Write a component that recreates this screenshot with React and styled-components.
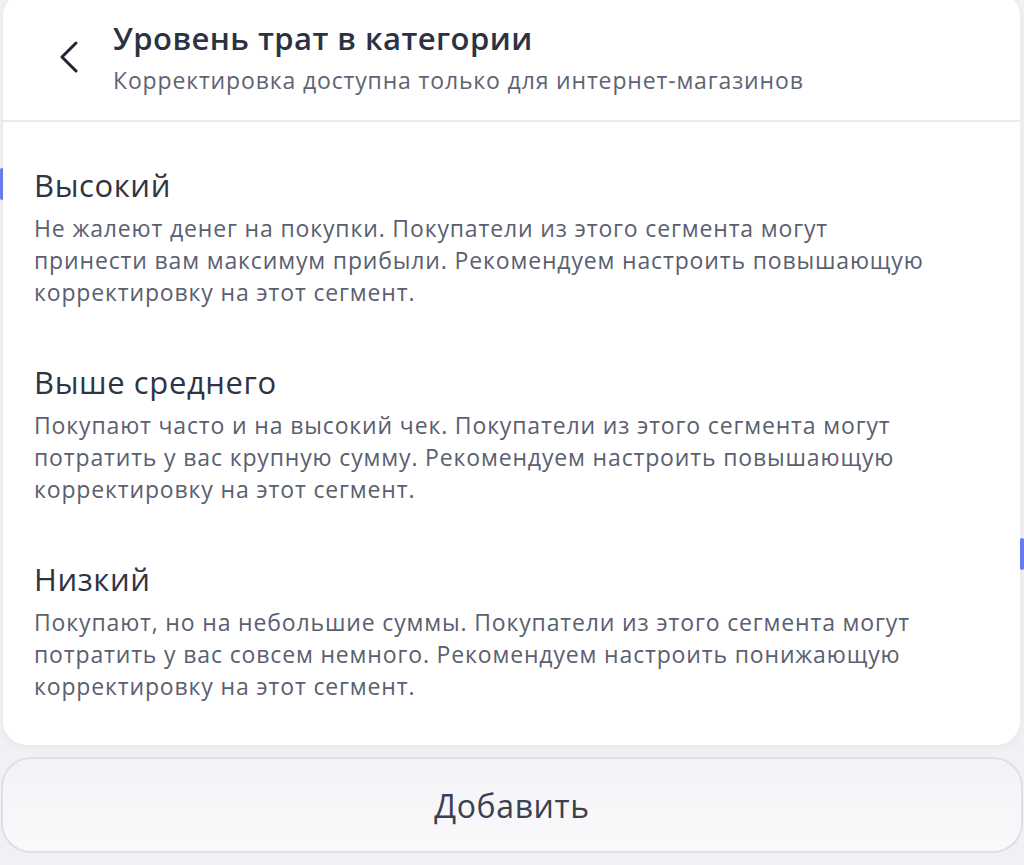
import React from "react";
import styled, { createGlobalStyle } from "styled-components";

const Global = createGlobalStyle`
  html, body { margin: 0; padding: 0; }
  body {
    background: #f1f1f5;
    font-family: "Open Sans", "Noto Sans", sans-serif;
    -webkit-font-smoothing: antialiased;
  }
`;

const Page = styled.div`
  position: relative;
  width: 1024px;
  height: 865px;
  overflow: hidden;
  display: flex;
  flex-direction: column;
  padding: 0 1px 0 1px;
  box-sizing: border-box;
`;

const Accent = styled.div`
  position: absolute;
  width: 4px;
  height: 32px;
  background: #6a7cf0;
  border-radius: 2px;
  top: ${(p) => p.$top}px;
  ${(p) => (p.$right ? "right: 0;" : "left: 0;")}
`;

const Card = styled.div`
  position: relative;
  margin: -8px 3px 0 2px;
  background: #ffffff;
  border-radius: 24px;
  box-shadow: 0 2px 8px rgba(40, 40, 80, 0.06);
  display: flex;
  flex-direction: column;
  height: 753px;
  box-sizing: border-box;
`;

const Header = styled.div`
  display: flex;
  align-items: flex-start;
  padding: 27px 24px 0 54px;
  height: 130px;
  box-sizing: border-box;
  border-bottom: 2px solid #e9e9ee;
`;

const BackButton = styled.button`
  width: 24px;
  height: 34px;
  margin-top: 21px;
  margin-right: 32px;
  padding: 0;
  border: none;
  background: none;
  display: flex;
  align-items: center;
  justify-content: center;
  cursor: pointer;
`;

const HeaderText = styled.div`
  display: flex;
  flex-direction: column;
`;

const Title = styled.h1`
  margin: 0;
  font-size: 31px;
  line-height: 38px;
  font-weight: 600;
  color: #2b3242;
  letter-spacing: 0.45px;
`;

const Subtitle = styled.div`
  font-size: 23px;
  line-height: 30px;
  color: #5e6474;
  margin-top: 8px;
  letter-spacing: 0.85px;
`;

const Body = styled.div`
  display: flex;
  flex-direction: column;
  gap: 56px;
  padding: 45px 24px 0 31px;
`;

const Section = styled.section`
  display: flex;
  flex-direction: column;
`;

const SectionTitle = styled.h2`
  margin: 0 0 8px 0;
  font-size: 31px;
  line-height: 37px;
  font-weight: 400;
  color: #2e3443;
  letter-spacing: 0.6px;
`;

const Desc = styled.p`
  margin: 0;
  font-size: 23px;
  line-height: 32px;
  color: #5a6070;
  letter-spacing: 0.85px;
  white-space: nowrap;
`;

const AddButton = styled.button`
  margin-top: 12px;
  height: 96px;
  width: 100%;
  border-radius: 30px;
  border: 2px solid #dfdfe8;
  background: linear-gradient(180deg, #f3f3f7 0%, #fafafc 100%);
  font-family: "Open Sans", "Noto Sans", sans-serif;
  font-size: 32px;
  letter-spacing: 0.6px;
  color: #3b4151;
  cursor: pointer;
  box-sizing: border-box;
`;

const ChevronLeft = () => (
  <svg width="20" height="32" viewBox="0 0 20 32" fill="none">
    <path d="M17 2 L3 16 L17 30" stroke="#1f2533" strokeWidth="3" strokeLinecap="round" strokeLinejoin="round" />
  </svg>
);

const sections = [
  {
    title: "Высокий",
    lines: [
      "Не жалеют денег на покупки. Покупатели из этого сегмента могут",
      "принести вам максимум прибыли. Рекомендуем настроить повышающую",
      "корректировку на этот сегмент.",
    ],
  },
  {
    title: "Выше среднего",
    lines: [
      "Покупают часто и на высокий чек. Покупатели из этого сегмента могут",
      "потратить у вас крупную сумму. Рекомендуем настроить повышающую",
      "корректировку на этот сегмент.",
    ],
  },
  {
    title: "Низкий",
    lines: [
      "Покупают, но на небольшие суммы. Покупатели из этого сегмента могут",
      "потратить у вас совсем немного. Рекомендуем настроить понижающую",
      "корректировку на этот сегмент.",
    ],
  },
];

export default function App() {
  return (
    <>
      <Global />
      <Page>
        <Accent $top={168} />
        <Accent $top={538} $right />
        <Card>
          <Header>
            <BackButton aria-label="Назад">
              <ChevronLeft />
            </BackButton>
            <HeaderText>
              <Title>Уровень трат в категории</Title>
              <Subtitle>Корректировка доступна только для интернет-магазинов</Subtitle>
            </HeaderText>
          </Header>
          <Body>
            {sections.map((s) => (
              <Section key={s.title}>
                <SectionTitle>{s.title}</SectionTitle>
                <Desc>
                  {s.lines.map((l, i) => (
                    <React.Fragment key={i}>
                      {l}
                      {i < s.lines.length - 1 && <br />}
                    </React.Fragment>
                  ))}
                </Desc>
              </Section>
            ))}
          </Body>
        </Card>
        <AddButton>Добавить</AddButton>
      </Page>
    </>
  );
}
